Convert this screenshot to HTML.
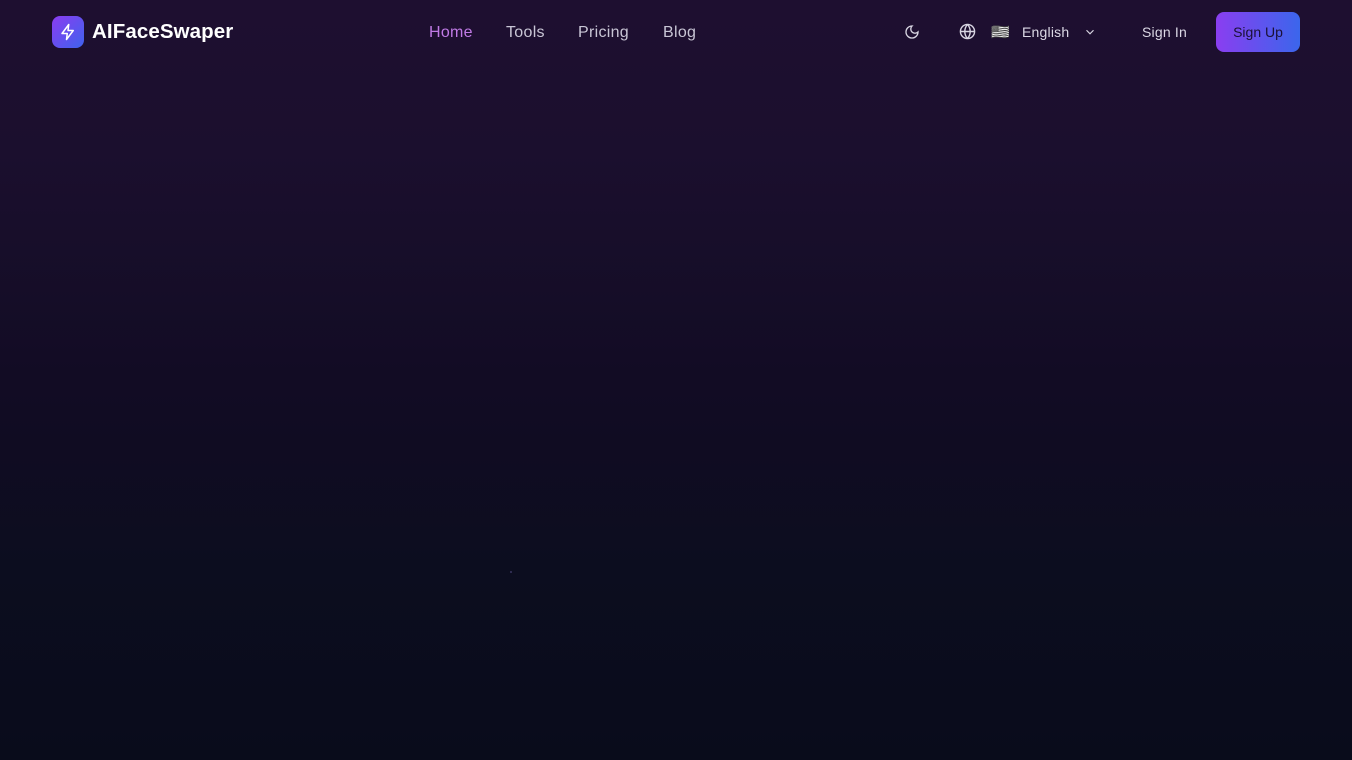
<!DOCTYPE html>
<html><head><meta charset="utf-8"><style>
html,body{margin:0;padding:0}
body{width:1352px;height:760px;overflow:hidden;font-family:"Liberation Sans",sans-serif;
background:linear-gradient(180deg,#1e0f30 0%,#1b0f2e 20%,#120c24 50%,#0c0d1f 75%,#090c1b 100%);position:relative}
.nav{position:absolute;top:0;left:0;width:1352px;height:64px}
.logo{position:absolute;left:52px;top:16px;width:32px;height:32px;border-radius:8px;background:linear-gradient(135deg,#8b3cf0,#3e63ee)}
.brand{position:absolute;left:92px;top:20px;color:#fff;font-weight:bold;font-size:20.5px;letter-spacing:0.1px}
.link{position:absolute;top:24px;font-size:16px;color:#c9c6d6;letter-spacing:0.3px}
.sm{position:absolute;top:24px;font-size:14px;color:#dcd9e6;letter-spacing:0.2px}
.btn{position:absolute;left:1216px;top:12px;width:84px;height:40px;border-radius:8px;background:linear-gradient(90deg,#8a3ef0,#3b66ec);color:#1a1036;font-size:14px;text-align:center;line-height:40px}
svg.i{position:absolute}
</style></head><body>
<div class="nav">
<div class="logo"><svg style="position:absolute;left:7px;top:7px" width="18" height="18" viewBox="0 0 24 24" fill="none" stroke="#fff" stroke-width="2" stroke-linejoin="round"><path d="M13 2 4 14h7l-1 8 9-12h-7z"/></svg></div>
<div class="brand">AIFaceSwaper</div>
<div class="link" style="left:429px;color:#c07ae6">Home</div>
<div class="link" style="left:506px">Tools</div>
<div class="link" style="left:578px">Pricing</div>
<div class="link" style="left:663px">Blog</div>
<svg class="i" style="left:904px;top:24px" width="16" height="16" viewBox="0 0 24 24" fill="none" stroke="#d8d5e2" stroke-width="2"><path d="M12 3a6 6 0 0 0 9 9 9 9 0 1 1-9-9z"/></svg>
<svg class="i" style="left:959px;top:23px" width="17" height="17" viewBox="0 0 24 24" fill="none" stroke="#d8d5e2" stroke-width="2"><circle cx="12" cy="12" r="10"/><path d="M2 12h20M12 2a15 15 0 0 1 0 20M12 2a15 15 0 0 0 0 20"/></svg>
<div class="sm" style="left:991px;top:23px;font-size:15px;filter:grayscale(1)">🇺🇸</div>
<div class="sm" style="left:1022px">English</div>
<svg class="i" style="left:1083px;top:25px" width="14" height="14" viewBox="0 0 24 24" fill="none" stroke="#d8d5e2" stroke-width="2"><path d="m6 9 6 6 6-6"/></svg>
<div class="sm" style="left:1142px">Sign In</div>
<div class="btn">Sign Up</div>
</div>
<div style="position:absolute;left:510px;top:571px;width:2px;height:2px;background:#3a3560;border-radius:50%"></div>
</body></html>
